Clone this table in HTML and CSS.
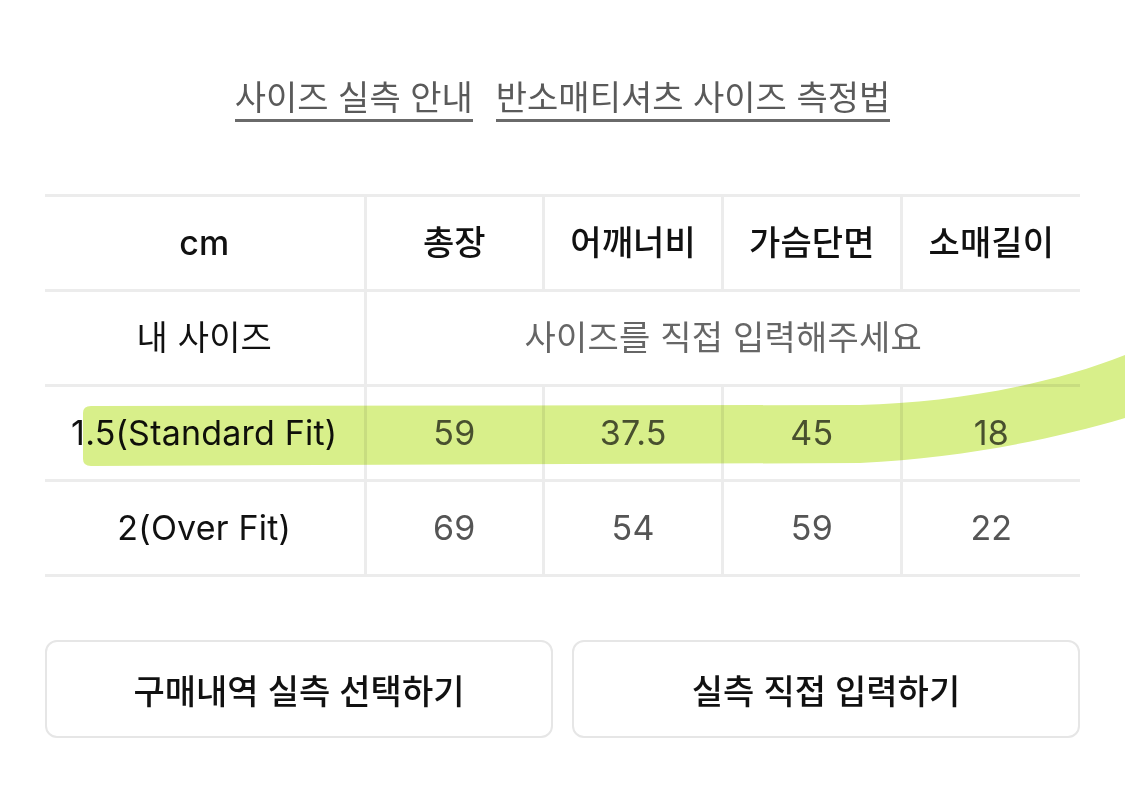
FILE: index.html
```html
<!DOCTYPE html>
<html lang="ko">
<head>
<meta charset="utf-8">
<title>사이즈 실측</title>
<link rel="stylesheet" href="styles.css">
</head>
<body>
<div class="page">
  <nav class="links">
    <a class="link" href="#">사이즈 실측 안내</a>
    <a class="link" href="#">반소매티셔츠 사이즈 측정법</a>
  </nav>

  <table class="size-table">
    <tr class="head">
      <th class="label">cm</th>
      <th>총장</th>
      <th>어깨너비</th>
      <th>가슴단면</th>
      <th>소매길이</th>
    </tr>
    <tr>
      <td class="label my">내 사이즈</td>
      <td class="hint" colspan="4">사이즈를 직접 입력해주세요</td>
    </tr>
    <tr>
      <td class="label">1.5(Standard Fit)</td>
      <td>59</td>
      <td>37.5</td>
      <td>45</td>
      <td>18</td>
    </tr>
    <tr>
      <td class="label">2(Over Fit)</td>
      <td>69</td>
      <td>54</td>
      <td>59</td>
      <td>22</td>
    </tr>
  </table>

  <div class="actions">
    <button class="btn" type="button">구매내역 실측 선택하기</button>
    <button class="btn" type="button">실측 직접 입력하기</button>
  </div>

  <svg class="marker" width="1125" height="793" viewBox="0 0 1125 793" aria-hidden="true">
    <path d="M83,413 Q83,406 91,406 L860,405 C950,403 1050,385 1125,355 L1125,418 C1050,440 960,458 860,463 L91,466 Q83,466 83,459 Z" fill="#d8ef8a"/>
  </svg>
</div>
</body>
</html>
```

FILE: styles.css
```css
* { box-sizing: border-box; }

html, body {
  margin: 0;
  padding: 0;
  background: #ffffff;
}

body {
  font-family: Inter, "Noto Sans CJK KR", sans-serif;
  color: #111111;
}

.page {
  position: relative;
  width: 1125px;
  height: 793px;
  padding: 80px 45px 0;
  overflow: hidden;
}

.links {
  display: flex;
  justify-content: center;
  gap: 23px;
}

.link {
  display: inline-block;
  font-size: 34px;
  line-height: 36px;
  color: #5a5a5a;
  text-decoration: none;
  padding-bottom: 3px;
  border-bottom: 3px solid #6a6a6a;
}

.size-table {
  margin-top: 72px;
  width: 1035px;
  border-collapse: collapse;
  table-layout: fixed;
  border-top: 3px solid #ececec;
}

.size-table tr {
  height: 95px;
  border-bottom: 3px solid #ececec;
}

.size-table th,
.size-table td {
  padding: 0;
  text-align: center;
  vertical-align: middle;
  font-size: 34px;
  line-height: 40px;
  letter-spacing: 0.2px;
  border-left: 3px solid #ececec;
}

.size-table .label {
  width: 320px;
  border-left: none;
  color: #111111;
}

.size-table th {
  font-weight: 500;
  color: #111111;
}

.size-table td {
  font-weight: 400;
  color: #555555;
}

.size-table td.label {
  color: #111111;
}

.size-table td.hint {
  color: #666666;
}

.actions {
  margin-top: 63px;
  display: flex;
  gap: 19px;
}

.btn {
  flex: 1;
  height: 98px;
  background: #ffffff;
  border: 2px solid #e6e6e6;
  border-radius: 12px;
  font-family: Inter, "Noto Sans CJK KR", sans-serif;
  font-size: 34px;
  font-weight: 500;
  color: #111111;
  padding: 0;
}

.marker {
  position: absolute;
  left: 0;
  top: 0;
  mix-blend-mode: multiply;
  pointer-events: none;
}
```
